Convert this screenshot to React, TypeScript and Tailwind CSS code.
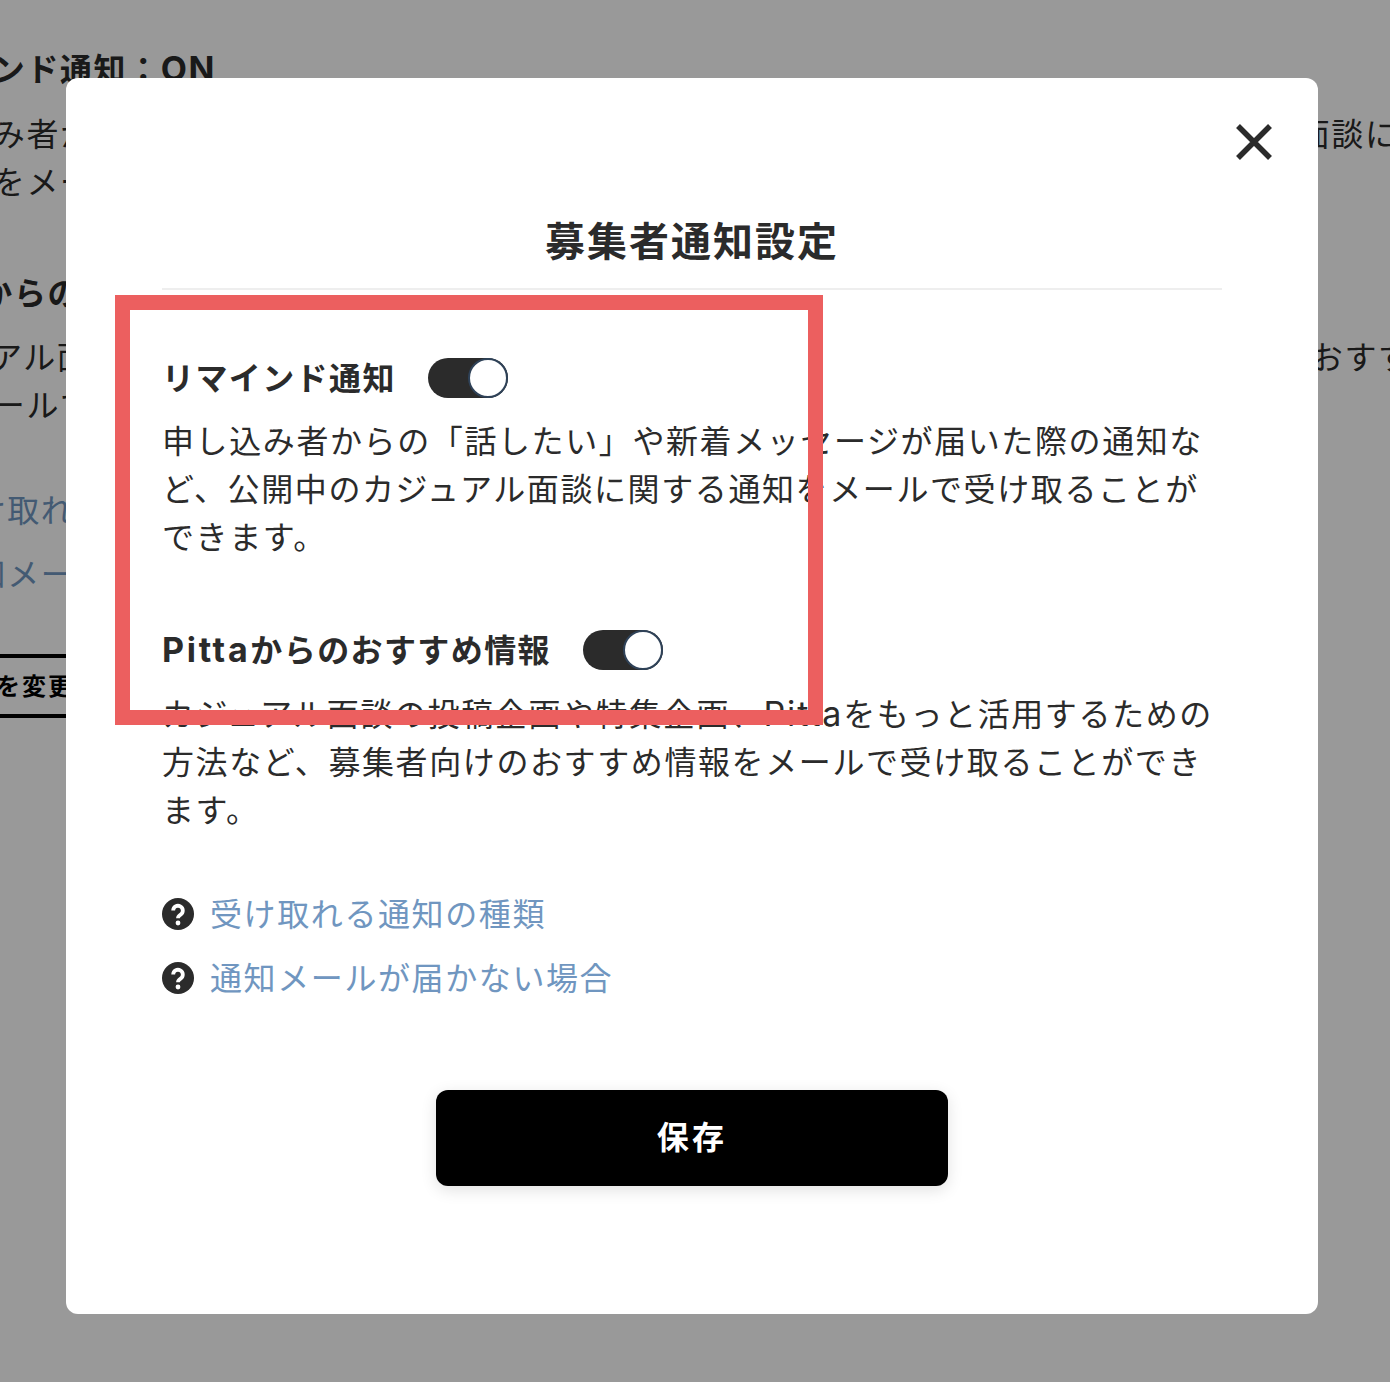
import React from 'react';

const Toggle: React.FC = () => (
  <div className="w-20 h-10 rounded-full bg-[#2b2b2b] flex justify-end">
    <div className="w-10 h-10 rounded-full bg-white border-2 border-[#2f4258]" />
  </div>
);

const SettingHeading: React.FC<{ children: React.ReactNode }> = ({ children }) => (
  <div className="flex items-start gap-8 h-12">
    <h3 className="text-[32px] leading-[40px] font-bold tracking-[1.4px]">{children}</h3>
    <Toggle />
  </div>
);

const HelpIcon: React.FC = () => (
  <svg viewBox="0 0 32 32" className="w-8 h-8 shrink-0" fill="none">
    <circle cx="16" cy="16" r="16" fill="#2b2b2b" />
    <path d="M11.2 12.6a4.8 4.8 0 1 1 7.4 4c-1.7 1.1-2.6 1.8-2.6 3.6" stroke="#fff" strokeWidth="3.8" />
    <circle cx="16" cy="25" r="2.4" fill="#fff" />
  </svg>
);

const HelpLink: React.FC<{ label: string }> = ({ label }) => (
  <a className="flex items-center gap-4 h-12">
    <HelpIcon />
    <span className="text-[32px] leading-[48px] tracking-[1.6px] text-[#7096c0]">{label}</span>
  </a>
);

// ページ本体（モーダルの後ろ）
const BackgroundPage: React.FC = () => (
  <div className="flex flex-col -ml-[108px] pt-[45px] w-[1600px] text-[32px] leading-[48px] tracking-[1.6px] text-[#2b2b2b] whitespace-nowrap">
    <div className="font-bold">リマインド通知：<span className="font-['Inter'] text-[34px] leading-none">ON</span></div>
    <div className="mt-[17px]">申し込み者からの「話したい」や新着メッセージが届いた際の通知など、公開中のカジュアル面談に関する通知</div>
    <div>の情報をメールで受け取ることができます。</div>
    <div className="mt-[63px] font-bold"><span className="font-['Inter'] text-[34px] leading-none tracking-[2.7px]">Pitta</span>からのおすすめ情報：ON</div>
    <div className="mt-4">カジュアル面談の投稿企画や特集企画、<span className="font-['Inter'] text-[34px] leading-none tracking-[1.8px]">Pitta</span>をもっと活用するための方法など、募集者向けのおすすめ情報を</div>
    <div>報をメールで受け取ることができます。</div>
    <div className="mt-[57px] flex flex-col gap-4">
      <HelpLink label="受け取れる通知の種類" />
      <HelpLink label="通知メールが届かない場合" />
    </div>
    <button className="mt-14 w-[400px] h-16 border-y-4 border-black pl-[52px] text-left text-[24px] font-bold tracking-[2px] text-black">
      設定を変更
    </button>
  </div>
);

export default function App() {
  return (
    <div className="relative w-[1390px] h-[1382px] overflow-hidden bg-white font-['Noto_Sans','Noto_Sans_CJK_JP',sans-serif] text-[#2b2b2b]">
      <BackgroundPage />

      {/* Modal */}
      <div className="absolute inset-0 bg-black/40 flex items-start pt-[78px] pl-[66px]">
        <div className="relative w-[1252px] h-[1236px] bg-white rounded-xl flex flex-col px-24 pt-[139px]">
          <button aria-label="close" className="absolute top-[46px] right-[46px] w-9 h-9 text-[#2b2b2b]">
            <svg viewBox="0 0 36 36" className="w-9 h-9" fill="none" stroke="currentColor" strokeWidth={5.5}>
              <path d="M2 2 L34 34 M34 2 L2 34" />
            </svg>
          </button>

          <h2 className="text-center text-[40px] leading-[48px] font-bold tracking-[2px] pb-[23px] border-b-2 border-[#eeeeee]">
            募集者通知設定
          </h2>

          <div className="mt-[68px]">
            <SettingHeading>リマインド通知</SettingHeading>
            <p className="mt-[11px] text-[32px] leading-[48px] tracking-[1.6px]">
              申し込み者からの「話したい」や新着メッセージが届いた際の通知など、公開中のカジュアル面談に関する通知をメールで受け取ることができます。
            </p>
          </div>

          <div className="mt-[69px]">
            <SettingHeading>
              <span className="font-['Inter'] text-[34px] leading-none tracking-[2.7px]">Pitta</span>からのおすすめ情報
            </SettingHeading>
            <p className="mt-3 text-[32px] leading-[48px] tracking-[1.6px]">
              カジュアル面談の投稿企画や特集企画、<span className="font-['Inter'] text-[34px] leading-none tracking-[1.8px]">Pitta</span>をもっと活用するための方法など、募集者向けのおすすめ情報をメールで受け取ることができます。
            </p>
          </div>

          <div className="mt-14 flex flex-col gap-4">
            <HelpLink label="受け取れる通知の種類" />
            <HelpLink label="通知メールが届かない場合" />
          </div>

          <button className="mt-[88px] self-center w-[512px] h-24 shrink-0 rounded-xl bg-black text-white text-[32px] pb-[2px] font-bold tracking-[3.2px] shadow-[0_4px_16px_rgba(0,0,0,0.12)]">
            保存
          </button>
        </div>
      </div>

      {/* 赤枠の注釈 */}
      <div className="absolute left-[115px] top-[295px] w-[708px] h-[430px] border-[15px] border-[#ec5f5f]" />
    </div>
  );
}
